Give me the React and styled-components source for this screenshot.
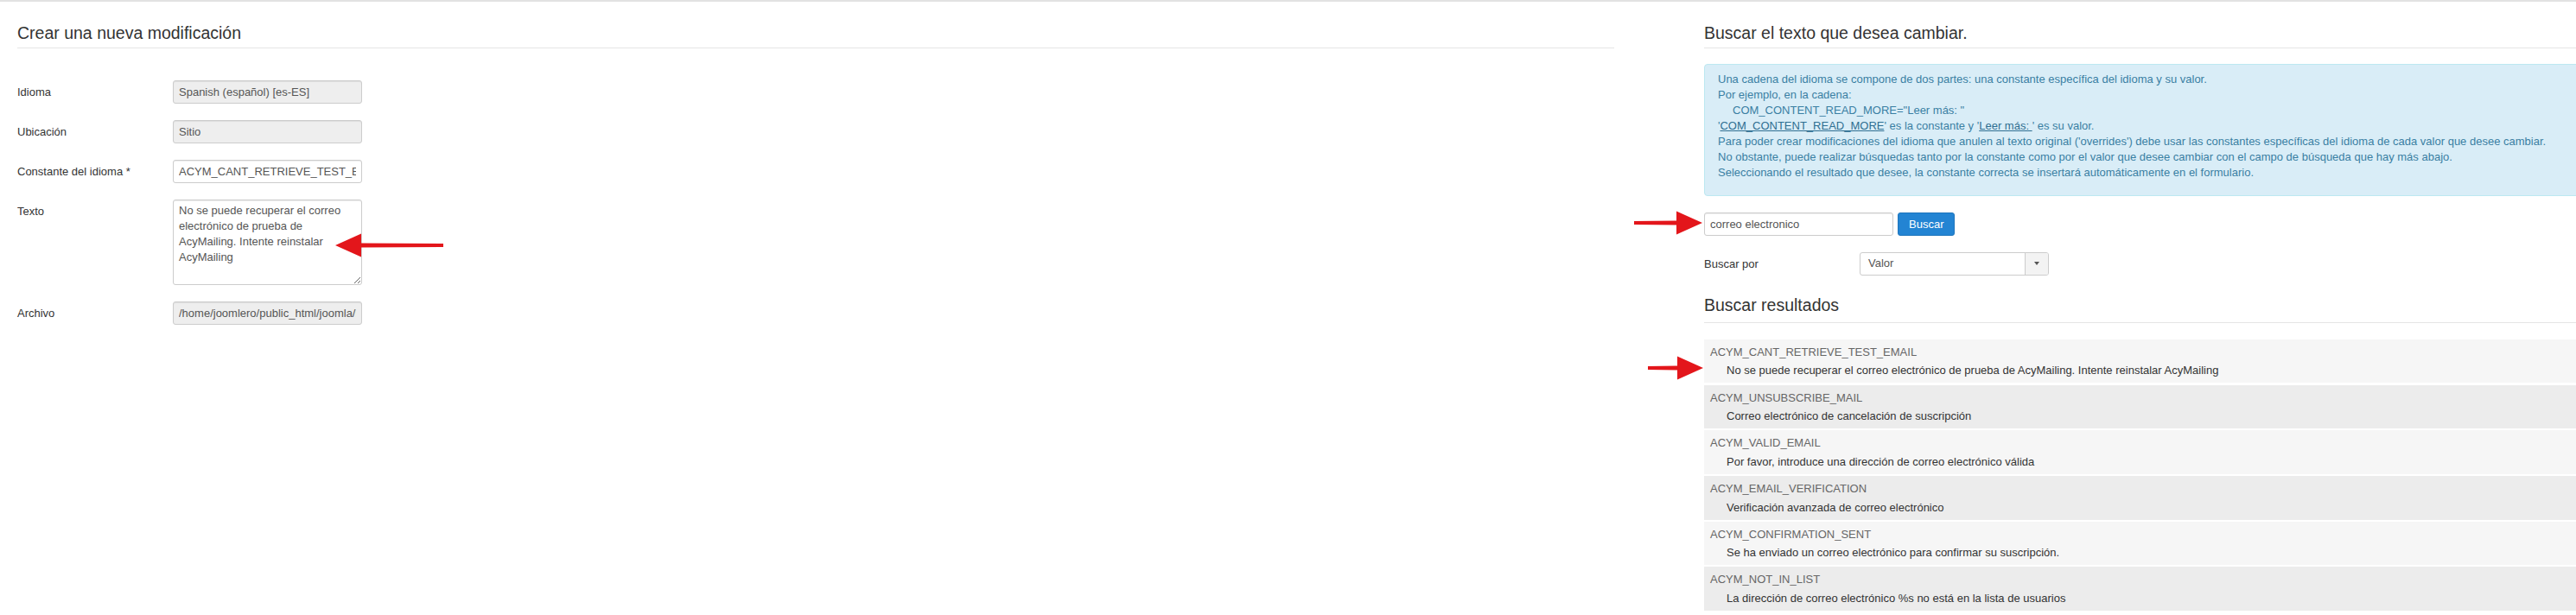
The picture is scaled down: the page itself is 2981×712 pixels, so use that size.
import React from 'react';
import styled, { createGlobalStyle } from 'styled-components';

const GlobalStyle = createGlobalStyle`
  html, body { margin: 0; padding: 0; overflow: hidden; background: #fff; }
  body {
    font-family: "Liberation Sans", Arial, Helvetica, sans-serif;
    font-size: 13px;
    line-height: 18px;
    color: #333;
  }
  *, *::before, *::after { box-sizing: border-box; }
`;

const Page = styled.div`
  position: relative;
  width: 2981px;
  height: 712px;
  overflow: hidden;
  border-top: 2px solid #e2e2e2;
`;

const Columns = styled.div`
  display: flex;
  gap: 104px;
  padding: 23.5px 0 0 20px;
`;

const Column = styled.section`
  flex: 0 0 ${(p) => p.$w}px;
`;

const Heading = styled.h3`
  margin: ${(p) => p.$mt || 0}px 0 0;
  font-size: 19.5px;
  font-weight: normal;
  line-height: 24px;
  color: #333;
  padding-bottom: ${(p) => p.$pb || 5}px;
  border-bottom: 1px solid #e5e5e5;
`;

const Form = styled.div`
  margin-top: 37px;
  display: flex;
  flex-direction: column;
  gap: 19px;
`;

const ControlGroup = styled.div`
  display: flex;
  align-items: flex-start;
  margin-top: ${(p) => p.$mt || 0}px;
`;

const Label = styled.label`
  flex: 0 0 180px;
  padding-top: 5px;
  line-height: 18px;
  color: #333;
`;

const TextInput = styled.input`
  width: ${(p) => p.$w || 219}px;
  height: 27px;
  padding: 0 6px;
  border: 1px solid #ccc;
  border-radius: 3px;
  font-family: inherit;
  font-size: 13px;
  color: #555;
  background: ${(p) => (p.readOnly ? '#eee' : '#fff')};
  box-shadow: inset 0 1px 1px rgba(0, 0, 0, 0.075);
  outline: none;
`;

const TextArea = styled.textarea`
  width: 219px;
  height: 99px;
  padding: 3px 6px;
  border: 1px solid #ccc;
  border-radius: 3px;
  font-family: inherit;
  font-size: 13px;
  line-height: 18px;
  color: #555;
  background: #fff;
  box-shadow: inset 0 1px 1px rgba(0, 0, 0, 0.075);
  outline: none;
  overflow: hidden;
`;

const InfoBox = styled.div`
  margin-top: 18.5px;
  padding: 8px 35px 8px 15px;
  background: #d9edf7;
  border: 1px solid #bce8f1;
  border-radius: 4px;
  color: #3a7fa3;
`;

const InfoText = styled.p`
  margin: 0 0 9px;
  white-space: nowrap;
`;

const Indent = styled.span`
  display: inline-block;
  padding-left: 17px;
`;

const Under = styled.span`
  text-decoration: underline;
  color: #2f6f92;
`;

const SearchRow = styled.div`
  margin-top: 18.7px;
  display: flex;
  align-items: center;
  gap: 5px;
`;

const SearchButton = styled.button`
  height: 27px;
  padding: 0 12px;
  background: #2384d3;
  border: 1px solid #1f76bd;
  border-radius: 3px;
  color: #fff;
  font-family: inherit;
  font-size: 13px;
  cursor: pointer;
`;

const ChosenSelect = styled.div`
  width: 219px;
  height: 27px;
  display: flex;
  align-items: center;
  border: 1px solid #ccc;
  border-radius: 3px;
  background: #fff;
  color: #555;
  overflow: hidden;
`;

const ChosenValue = styled.span`
  flex: 1;
  padding-left: 9px;
`;

const ChosenArrow = styled.span`
  width: 27px;
  align-self: stretch;
  display: flex;
  align-items: center;
  justify-content: center;
  border-left: 1px solid #ccc;
  background: #f3f3f3;
`;

const Caret = styled.span`
  width: 0;
  height: 0;
  border-left: 3.5px solid transparent;
  border-right: 3.5px solid transparent;
  border-top: 4px solid #555;
`;

const Results = styled.div`
  margin-top: 19px;
  display: flex;
  flex-direction: column;
  gap: 2.2px;
`;

const ResultRow = styled.div`
  padding: 6px 7px 5px;
  background: ${(p) => (p.$alt ? '#ececec' : '#f6f6f6')};
  cursor: pointer;
`;

const ResultKey = styled.div`
  line-height: 18px;
  color: #666;
`;

const ResultValue = styled.div`
  margin-top: 3.5px;
  padding-left: 19px;
  line-height: 18px;
  color: #333;
`;

const Marker = styled.svg`
  position: absolute;
  left: ${(p) => p.$x}px;
  top: ${(p) => p.$y}px;
  pointer-events: none;
  overflow: visible;
`;

function Arrow({ x, y, length, dir }) {
  const H = 30;
  const L = length;
  const left = `0,14 ${H},0.5 ${H},11.5 ${L},12 ${L},16 ${H},16.5 ${H},27.5`;
  const right = `${L},14 ${L - H},0.5 ${L - H},11.5 0,12 0,16 ${L - H},16.5 ${L - H},27.5`;
  return (
    <Marker $x={x} $y={y} width={L} height={28} viewBox={`0 0 ${L} 28`}>
      <polygon points={dir === 'left' ? left : right} fill="#e3161b" />
    </Marker>
  );
}

const results = [
  ['ACYM_CANT_RETRIEVE_TEST_EMAIL', 'No se puede recuperar el correo electrónico de prueba de AcyMailing. Intente reinstalar AcyMailing'],
  ['ACYM_UNSUBSCRIBE_MAIL', 'Correo electrónico de cancelación de suscripción'],
  ['ACYM_VALID_EMAIL', 'Por favor, introduce una dirección de correo electrónico válida'],
  ['ACYM_EMAIL_VERIFICATION', 'Verificación avanzada de correo electrónico'],
  ['ACYM_CONFIRMATION_SENT', 'Se ha enviado un correo electrónico para confirmar su suscripción.'],
  ['ACYM_NOT_IN_LIST', 'La dirección de correo electrónico %s no está en la lista de usuarios'],
];

export default function App() {
  return (
    <>
      <GlobalStyle />
      <Page>
        <Columns>
          <Column $w={1848}>
            <Heading>Crear una nueva modificación</Heading>
            <Form>
              <ControlGroup>
                <Label>Idioma</Label>
                <TextInput readOnly value="Spanish (español) [es-ES]" />
              </ControlGroup>
              <ControlGroup>
                <Label>Ubicación</Label>
                <TextInput readOnly value="Sitio" />
              </ControlGroup>
              <ControlGroup>
                <Label>Constante del idioma *</Label>
                <TextInput defaultValue="ACYM_CANT_RETRIEVE_TEST_EMAIL" />
              </ControlGroup>
              <ControlGroup>
                <Label>Texto</Label>
                <TextArea defaultValue="No se puede recuperar el correo electrónico de prueba de AcyMailing. Intente reinstalar AcyMailing" />
              </ControlGroup>
              <ControlGroup>
                <Label>Archivo</Label>
                <TextInput readOnly value="/home/joomlero/public_html/joomla/language/overrides/es-ES.override.ini" />
              </ControlGroup>
            </Form>
          </Column>

          <Column $w={1100}>
            <Heading>Buscar el texto que desea cambiar.</Heading>
            <InfoBox>
              <InfoText>
                Una cadena del idioma se compone de dos partes: una constante específica del idioma y su valor.
                <br />
                Por ejemplo, en la cadena:
                <br />
                <Indent>COM_CONTENT_READ_MORE="Leer más: "</Indent>
                <br />
                '<Under>COM_CONTENT_READ_MORE</Under>' es la constante y '<Under>Leer más: </Under>' es su valor.
                <br />
                Para poder crear modificaciones del idioma que anulen al texto original ('overrides') debe usar las constantes específicas del idioma de cada valor que desee cambiar.
                <br />
                No obstante, puede realizar búsquedas tanto por la constante como por el valor que desee cambiar con el campo de búsqueda que hay más abajo.
                <br />
                Seleccionando el resultado que desee, la constante correcta se insertará automáticamente en el formulario.
              </InfoText>
            </InfoBox>

            <SearchRow>
              <TextInput defaultValue="correo electronico" />
              <SearchButton type="button">Buscar</SearchButton>
            </SearchRow>

            <ControlGroup $mt={19}>
              <Label>Buscar por</Label>
              <ChosenSelect>
                <ChosenValue>Valor</ChosenValue>
                <ChosenArrow>
                  <Caret />
                </ChosenArrow>
              </ChosenSelect>
            </ControlGroup>

            <Heading $mt={22.8} $pb={7.5}>Buscar resultados</Heading>

            <Results>
              {results.map(([key, value], i) => (
                <ResultRow key={key} $alt={i % 2 === 1}>
                  <ResultKey>{key}</ResultKey>
                  <ResultValue>{value}</ResultValue>
                </ResultRow>
              ))}
            </Results>
          </Column>
        </Columns>

        <Arrow x={388} y={268} length={125} dir="left" />
        <Arrow x={1891} y={242} length={79} dir="right" />
        <Arrow x={1907} y={410} length={64} dir="right" />
      </Page>
    </>
  );
}
